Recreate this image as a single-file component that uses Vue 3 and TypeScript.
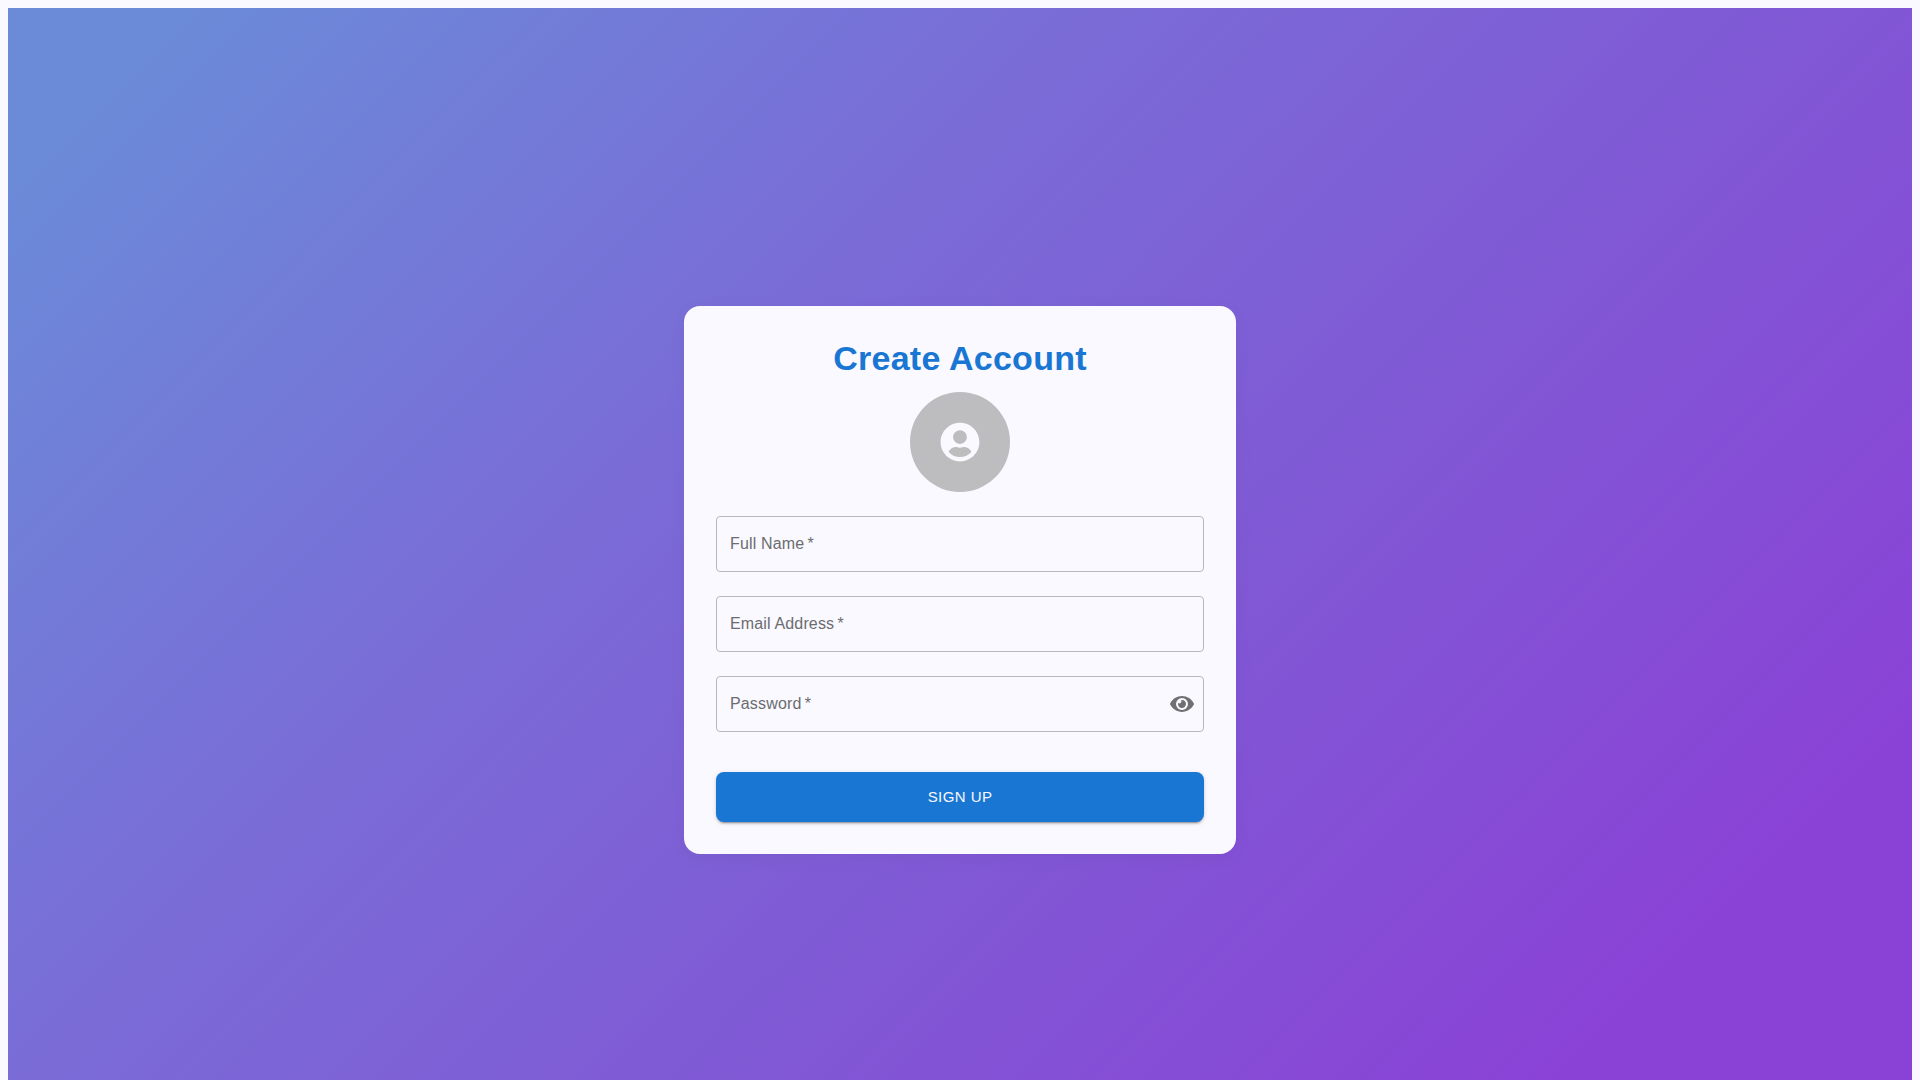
<script setup lang="ts">
import { reactive, ref } from 'vue'

const form = reactive({ name: '', email: '', password: '' })
const showPassword = ref(false)
</script>

<template>
  <main class="page">
    <form class="card" @submit.prevent>
      <h1 class="title">Create Account</h1>
      <div class="avatar">
        <svg viewBox="0 0 496 512" aria-hidden="true">
          <path
            d="M248 8C111 8 0 119 0 256s111 248 248 248 248-111 248-248S385 8 248 8zm0 96c48.600 0 88 39.400 88 88s-39.400 88-88 88-88-39.400-88-88 39.400-88 88-88zm0 344c-58.700 0-111.300-26.600-146.500-68.200 18.800-35.400 55.600-59.800 98.500-59.800 2.400 0 4.800.4 7.100 1.100 13 4.200 26.600 6.900 40.900 6.900 14.300 0 28-2.700 40.900-6.900 2.300-.7 4.700-1.100 7.100-1.100 42.900 0 79.700 24.400 98.500 59.800C359.300 421.400 306.700 448 248 448z"
          />
        </svg>
      </div>
      <div class="field">
        <input id="name" v-model="form.name" type="text" placeholder=" " required />
        <label for="name">Full Name<span>&thinsp;*</span></label>
      </div>
      <div class="field">
        <input id="email" v-model="form.email" type="email" placeholder=" " required />
        <label for="email">Email Address<span>&thinsp;*</span></label>
      </div>
      <div class="field">
        <input
          id="password"
          v-model="form.password"
          :type="showPassword ? 'text' : 'password'"
          placeholder=" "
          required
        />
        <label for="password">Password<span>&thinsp;*</span></label>
        <button
          class="toggle"
          type="button"
          aria-label="Toggle password visibility"
          @click="showPassword = !showPassword"
        >
          <svg viewBox="0 0 576 512" aria-hidden="true">
            <path
              d="M572.520 241.400C518.290 135.590 410.930 64 288 64S57.680 135.640 3.480 241.410a32.350 32.350 0 0 0 0 29.190C57.710 376.410 165.070 448 288 448s230.320-71.640 284.520-177.410a32.350 32.350 0 0 0 0-29.190zM288 400a144 144 0 1 1 144-144 143.930 143.930 0 0 1-144 144zm0-240a95.310 95.310 0 0 0-25.310 3.790 47.850 47.850 0 0 1-66.900 66.900A95.780 95.780 0 1 0 288 160z"
            />
          </svg>
        </button>
      </div>
      <button class="submit" type="submit">SIGN UP</button>
    </form>
  </main>
</template>

<style>
body {
  margin: 8px;
  background: #f9f9ff;
}
</style>

<style scoped>
.page {
  box-sizing: border-box;
  display: flex;
  align-items: center;
  justify-content: center;
  min-height: 100vh;
  padding: 64px 24px 0;
  background: linear-gradient(135deg, #6b8ad8 6%, #7a6cd7 36%, #8059d5 60%, #8a42d6 88%);
  font-family: "Liberation Sans", Arial, sans-serif;
}

.card {
  box-sizing: border-box;
  display: flex;
  flex-direction: column;
  width: 100%;
  max-width: 552px;
  padding: 32px;
  border-radius: 16px;
  background: #f9f9ff;
  box-shadow: 0 4px 20px rgba(0, 0, 0, 0.04);
}

.title {
  margin: 0 0 14px;
  color: #1976d2;
  font-size: 34px;
  font-weight: 700;
  line-height: 40px;
  letter-spacing: 0.00735em;
  text-align: center;
}

.avatar {
  display: flex;
  align-items: center;
  justify-content: center;
  align-self: center;
  width: 100px;
  height: 100px;
  margin-bottom: 24px;
  border-radius: 50%;
  background: #bdbdbf;
}

.avatar svg {
  width: 40px;
  height: 40px;
  fill: #f9f9ff;
}

.field {
  position: relative;
  margin-bottom: 24px;
}

.field input {
  display: block;
  box-sizing: border-box;
  width: 100%;
  height: 56px;
  padding: 0 48px 0 14px;
  border: 1px solid #b8b8bc;
  border-radius: 4px;
  outline: 0;
  background: transparent;
  color: #222;
  font: 16px "Liberation Sans", Arial, sans-serif;
}

.field input:focus {
  border-color: #1976d2;
}

.field label {
  position: absolute;
  top: 16px;
  left: 14px;
  color: #6c6c70;
  font-size: 16px;
  line-height: 23px;
  letter-spacing: 0.00938em;
  pointer-events: none;
}

.field input:focus + label,
.field input:not(:placeholder-shown) + label {
  top: -8px;
  padding: 0 4px;
  background: #f9f9ff;
  font-size: 12px;
  line-height: 16px;
}

.toggle {
  position: absolute;
  top: 8px;
  right: 2px;
  display: flex;
  align-items: center;
  justify-content: center;
  width: 40px;
  height: 40px;
  padding: 0;
  border: 0;
  border-radius: 50%;
  background: transparent;
  cursor: pointer;
}

.toggle svg {
  width: 24px;
  height: 24px;
  fill: #707073;
}

.submit {
  height: 50px;
  margin-top: 16px;
  padding: 0 24px 2px;
  border: 0;
  border-radius: 8px;
  background: #1976d2;
  box-shadow:
    0 3px 1px -2px rgba(0, 0, 0, 0.2),
    0 2px 2px rgba(0, 0, 0, 0.14),
    0 1px 5px rgba(0, 0, 0, 0.12);
  color: #f9f9ff;
  font: 15px "Liberation Sans", Arial, sans-serif;
  letter-spacing: 0.02857em;
  cursor: pointer;
}
</style>
